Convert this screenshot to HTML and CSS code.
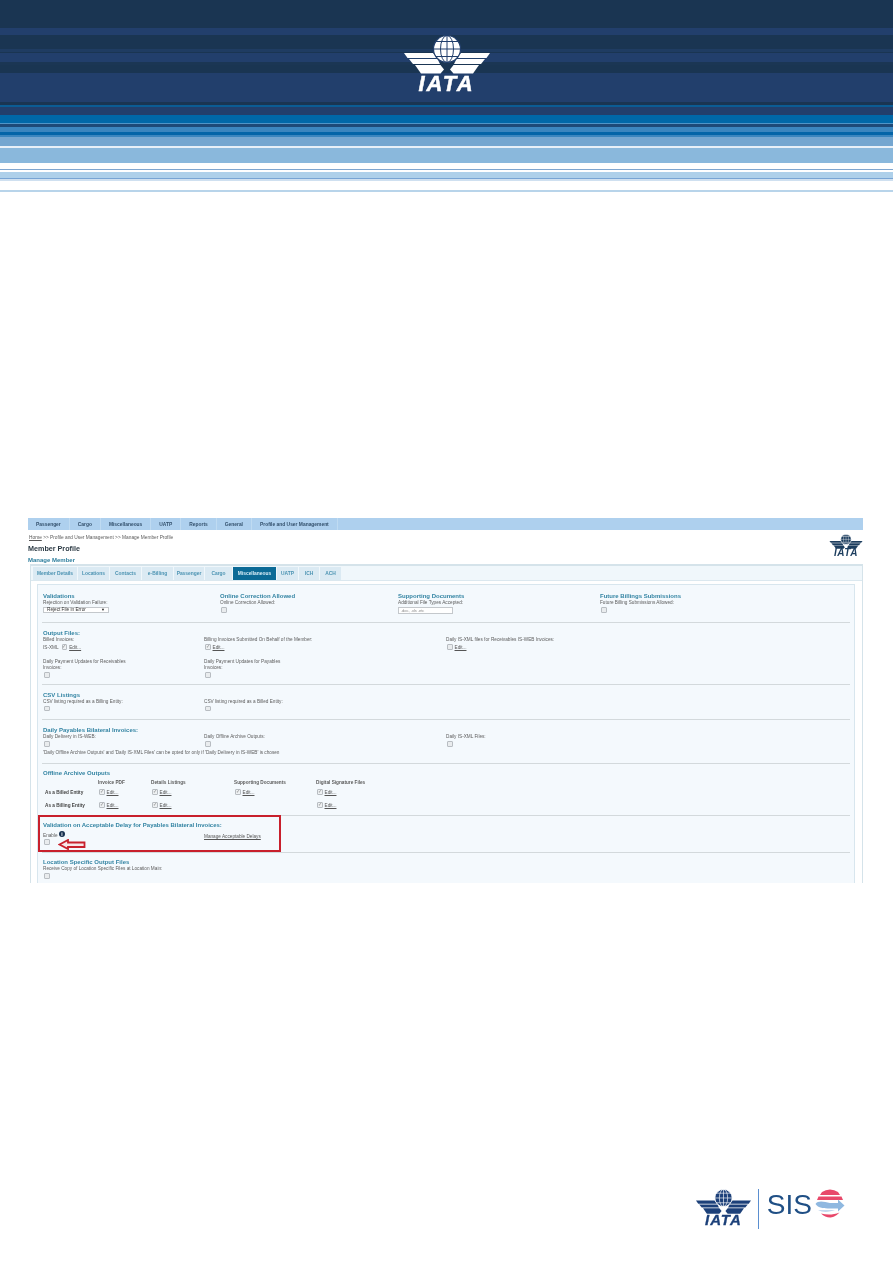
FILE: index.html
```html
<!DOCTYPE html>
<html lang="en">
<head>
    <meta charset="UTF-8">
    <meta name="viewport" content="width=device-width, initial-scale=1.0">
    <title>IATA SIS - Member Profile</title>
    <link rel="stylesheet" href="styles.css">
</head>
<body>
    <!-- Shared wings + globe mark -->
    <svg class="defs" aria-hidden="true">
        <symbol id="iata-mark" viewBox="0 0 86 39">
            <g id="iata-wing" class="mark-fill">
                <path d="M0 18H29L33 23H3.500Z"/>
                <path d="M5 24H33.500L36 29H9Z"/>
                <path d="M11 30H36.500L40 34.500L36.500 38.500H17Z"/>
            </g>
            <use href="#iata-wing" transform="matrix(-1 0 0 1 86 0)"/>
            <circle class="mark-fill mark-ring" cx="43" cy="14" r="13.500"/>
            <g class="mark-line">
                <ellipse cx="43" cy="14" rx="6.500" ry="13.500"/>
                <path d="M43 .5V27.500M29.500 14H56.500M32 6.500H54M32 21.500H54"/>
            </g>
        </symbol>
    </svg>

    <!-- Header Section -->
    <header class="banner">
        <div class="iata-logo logo-banner">
            <svg class="logo-mark"><use href="#iata-mark"/></svg>
            <span class="logo-text">IATA</span>
        </div>
    </header>

    <!-- Screenshot of the profile page -->
    <main class="shot">
        <nav class="menu">
            <a href="#">Passenger</a>
            <a href="#">Cargo</a>
            <a href="#">Miscellaneous</a>
            <a href="#">UATP</a>
            <a href="#">Reports</a>
            <a href="#">General</a>
            <a href="#">Profile and User Management</a>
        </nav>

        <div class="shot-head">
            <div>
                <p class="crumbs"><a href="#">Home</a> &gt;&gt; Profile and User Management &gt;&gt; Manage Member Profile</p>
                <h1>Member Profile</h1>
                <h2>Manage Member</h2>
            </div>
            <div class="iata-logo logo-small">
                <svg class="logo-mark"><use href="#iata-mark"/></svg>
                <span class="logo-text">IATA</span>
            </div>
        </div>

        <div class="panel">
            <ul class="tabs">
                <li>Member Details</li>
                <li>Locations</li>
                <li>Contacts</li>
                <li>e-Billing</li>
                <li>Passenger</li>
                <li>Cargo</li>
                <li class="active">Miscellaneous</li>
                <li>UATP</li>
                <li>ICH</li>
                <li>ACH</li>
            </ul>

            <div class="box">
                <section class="sec sec-validations">
                    <div class="cols cols-four">
                        <div>
                            <h3>Validations</h3>
                            <label>Rejection on Validation Failure:</label>
                            <div class="select"><span>Reject File in Error</span><span class="caret">▼</span></div>
                        </div>
                        <div>
                            <h3>Online Correction Allowed</h3>
                            <label>Online Correction Allowed:</label>
                            <input type="checkbox">
                        </div>
                        <div>
                            <h3>Supporting Documents</h3>
                            <label>Additional File Types Accepted:</label>
                            <div class="text-input">.doc, .xls .etc</div>
                        </div>
                        <div>
                            <h3>Future Billings Submissions</h3>
                            <label>Future Billing Submissions Allowed:</label>
                            <input type="checkbox">
                        </div>
                    </div>
                </section>

                <section class="sec sec-output">
                    <h3>Output Files:</h3>
                    <div class="cols cols-three">
                        <div>
                            <label>Billed Invoices:</label>
                            <div class="check-row">IS-XML <input type="checkbox" checked> <a href="#">Edit...</a></div>
                        </div>
                        <div>
                            <label>Billing Invoices Submitted On Behalf of the Member:</label>
                            <div class="check-row"><input type="checkbox" checked> <a href="#">Edit...</a></div>
                        </div>
                        <div>
                            <label>Daily IS-XML files for Receivables IS-WEB Invoices:</label>
                            <div class="check-row"><input type="checkbox"> <a href="#">Edit...</a></div>
                        </div>
                    </div>
                    <div class="cols cols-three row-gap">
                        <div>
                            <label>Daily Payment Updates for Receivables<br>Invoices:</label>
                            <input type="checkbox">
                        </div>
                        <div>
                            <label>Daily Payment Updates for Payables<br>Invoices:</label>
                            <input type="checkbox">
                        </div>
                    </div>
                </section>

                <section class="sec sec-csv">
                    <h3>CSV Listings</h3>
                    <div class="cols cols-three">
                        <div>
                            <label>CSV listing required as a Billing Entity:</label>
                            <input type="checkbox">
                        </div>
                        <div>
                            <label>CSV listing required as a Billed Entity:</label>
                            <input type="checkbox">
                        </div>
                    </div>
                </section>

                <section class="sec sec-daily">
                    <h3>Daily Payables Bilateral Invoices:</h3>
                    <div class="cols cols-three">
                        <div>
                            <label>Daily Delivery in IS-WEB:</label>
                            <input type="checkbox">
                        </div>
                        <div>
                            <label>Daily Offline Archive Outputs:</label>
                            <input type="checkbox">
                        </div>
                        <div>
                            <label>Daily IS-XML Files:</label>
                            <input type="checkbox">
                        </div>
                    </div>
                    <p class="note">'Daily Offline Archive Outputs' and 'Daily IS-XML Files' can be opted for only if 'Daily Delivery in IS-WEB' is chosen</p>
                </section>

                <section class="sec sec-offline">
                    <h3>Offline Archive Outputs</h3>
                    <div class="archive">
                        <span></span>
                        <b>Invoice PDF</b>
                        <b>Details Listings</b>
                        <b>Supporting Documents</b>
                        <b>Digital Signature Files</b>

                        <b class="entity">As a Billed Entity</b>
                        <div class="check-row"><input type="checkbox" checked> <a href="#">Edit...</a></div>
                        <div class="check-row"><input type="checkbox" checked> <a href="#">Edit...</a></div>
                        <div class="check-row"><input type="checkbox" checked> <a href="#">Edit...</a></div>
                        <div class="check-row"><input type="checkbox" checked> <a href="#">Edit...</a></div>

                        <b class="entity">As a Billing Entity</b>
                        <div class="check-row"><input type="checkbox" checked> <a href="#">Edit...</a></div>
                        <div class="check-row"><input type="checkbox" checked> <a href="#">Edit...</a></div>
                        <span></span>
                        <div class="check-row"><input type="checkbox" checked> <a href="#">Edit...</a></div>
                    </div>
                </section>

                <section class="sec sec-delay">
                    <h3>Validation on Acceptable Delay for Payables Bilateral Invoices:</h3>
                    <div class="cols cols-three">
                        <div>
                            <label>Enable <span class="info">i</span></label>
                            <input type="checkbox">
                        </div>
                        <div class="manage"><a href="#">Manage Acceptable Delays</a></div>
                    </div>
                    <!-- Annotation drawn over the screenshot -->
                    <div class="callout"></div>
                    <svg class="callout-arrow" viewBox="0 0 28 11">
                        <path d="M1.500 5.500L10 1V3.500H26.500V8H10V10Z"/>
                    </svg>
                </section>

                <section class="sec sec-location">
                    <h3>Location Specific Output Files</h3>
                    <label>Receive Copy of Location Specific Files at Location Main:</label>
                    <input type="checkbox">
                </section>
                <div class="cut-line"></div>
            </div>
        </div>
    </main>

    <!-- Footer Logos -->
    <footer class="footer">
        <div class="iata-logo logo-footer">
            <svg class="logo-mark"><use href="#iata-mark"/></svg>
            <span class="logo-text">IATA</span>
        </div>
        <span class="footer-rule"></span>
        <span class="sis">SIS</span>
        <svg class="sis-globe" viewBox="0 0 30 30">
            <path class="sis-red" d="M7 3A14 14 0 0 1 23 3L25 6H5Z"/>
            <path class="sis-red" d="M3.500 7.500H26.500L28 11H2Z"/>
            <path class="sis-blue" d="M.5 15C3 11 9 12.500 15 14H23V10.500L29.500 16.500L23 22.500V19.500H15C9 19.500 3 19 .5 15Z"/>
            <path class="sis-blue-pale" d="M3 21H20C15 23 8 24 3 21Z"/>
            <path class="sis-red" d="M6 24.500C12 26 18 26 24.500 23.500C21 27.500 17 28.500 15 28.500C12 28.500 8.500 27 6 24.500Z"/>
        </svg>
    </footer>
</body>
</html>
```

FILE: styles.css
```css
body {
    margin: 0;
    background-color: #fff;
    font-family: 'Liberation Sans', Arial, sans-serif;
}

.defs {
    display: none;
}

/* Striped page banner */
.banner {
    display: flex;
    justify-content: center;
    box-sizing: border-box;
    height: 192px;
    padding-top: 35px;
    background: linear-gradient(to bottom,
        #1a3552 0 28px, #223f6c 28px 35px, #1a3552 35px 49px, #1f3c62 49px 52px,
        #1a3552 52px 53px, #223f6c 53px 62px, #1b3654 62px 65px, #1a3552 65px 73px,
        #223f6c 73px 102px, #1a3552 102px 105px, #0b5c94 105px 107px, #223f6c 107px 115px,
        #0068a8 115px 123px, #4f95c8 123px 124px, #1d4a78 124px 127px, #3b86bf 127px 132px,
        #0465a8 132px 135px, #3b86bf 135px 137px, #74a6d0 137px 146px, #e8f0f8 146px 148px,
        #8ab8dc 148px 163px, #fff 163px 169px, #7fa6d0 169px 170px, #fff 170px 172px,
        #aed0ea 172px 178px, #78a4d4 178px 179px, #cfe0f0 179px 181px, #fff 181px 190px,
        #b8d4ea 190px 192px);
}

.iata-logo {
    display: flex;
    flex-direction: column;
    align-items: center;
    color: var(--logo-ink);
}

.logo-mark {
    display: block;
}

.mark-fill {
    fill: var(--logo-ink);
}

.mark-ring {
    stroke: var(--logo-line);
    stroke-width: 1.2;
}

.mark-line {
    fill: none;
    stroke: var(--logo-line);
    stroke-width: 1;
}

.logo-text {
    font-weight: bold;
    font-style: italic;
}

.logo-banner {
    --logo-ink: #fff;
    --logo-line: #223f6c;
    filter: blur(0.3px);
}

.logo-banner .logo-mark {
    width: 86px;
    height: 39px;
}

.logo-banner .logo-text {
    margin-top: 1px;
    font-size: 22px;
    line-height: 17px;
    letter-spacing: 2px;
    -webkit-text-stroke: 0.5px #fff;
}

.logo-small {
    --logo-ink: #1c3d5e;
    --logo-line: #fff;
    flex: none;
    margin-top: 4px;
}

.logo-small .logo-mark {
    width: 34px;
    height: 15px;
}

.logo-small .logo-text {
    font-size: 10px;
    line-height: 8px;
    letter-spacing: 0.5px;
}

.logo-footer {
    --logo-ink: #1c4079;
    --logo-line: #fff;
}

.logo-footer .logo-mark {
    width: 55px;
    height: 25px;
}

.logo-footer .logo-text {
    font-size: 15px;
    line-height: 11px;
    letter-spacing: 1px;
    -webkit-text-stroke: 0.3px #1c4079;
}

/* Screenshot area */
.shot {
    height: 365px;
    margin: 326px 30px 0 28px;
    overflow: hidden;
    font-size: 4.700px;
    color: #5c5c5c;
    filter: blur(0.4px);
}

.shot a {
    color: #555;
}

.menu {
    display: flex;
    height: 12px;
    background-color: #aed0ee;
}

.menu a {
    display: flex;
    align-items: center;
    padding: 0 8px;
    font-size: 4.900px;
    font-weight: bold;
    color: #33506c;
    text-decoration: none;
    border-right: 1px solid #bfdbf2;
}

.shot-head {
    display: flex;
    justify-content: space-between;
    height: 34px;
}

.crumbs {
    margin: 4.500px 0 0 1px;
    font-size: 4.800px;
    line-height: 6px;
}

h1 {
    margin: 3.500px 0 0;
    font-size: 7.200px;
    line-height: 10px;
    color: #2c3a44;
}

h2 {
    margin: 2px 0 0;
    font-size: 6px;
    line-height: 8px;
    color: #2f7f9e;
}

.panel {
    box-sizing: border-box;
    height: 319px;
    margin: 0 0 0 2px;
    border: 1px solid #d5e3ea;
    border-bottom: none;
    border-top-width: 2px;
    background-color: #fff;
}

.tabs {
    display: grid;
    grid-template-columns: 45px 32px 32px 32px 31px 28px 44px 22px 21px 22px;
    height: 13px;
    margin: 0;
    padding: 1px 0 0 2px;
    list-style: none;
    background-color: #f0f7fb;
    border-bottom: 1px solid #dbe8ef;
}

.tabs li {
    display: flex;
    align-items: center;
    justify-content: center;
    font-size: 4.900px;
    font-weight: bold;
    color: #4b93b2;
    background-color: #dbeaf3;
    border-right: 1px solid #f0f7fb;
}

.tabs .active {
    color: #d8edf7;
    background-color: #0b6a96;
}

.box {
    box-sizing: border-box;
    height: 306px;
    margin: 3px 7px 0 6px;
    padding: 0 4px;
    background-color: #f4f9fd;
    border: 1px solid #d8e6ee;
    border-bottom: none;
}

.sec {
    position: relative;
    box-sizing: border-box;
    padding: 6px 0 0 1px;
    border-bottom: 1px solid #d3d9dc;
}

.sec-validations { height: 38px; padding-top: 7px; }
.sec-output { height: 62px; }
.sec-csv { height: 35px; padding-top: 5.500px; }
.sec-daily { height: 44px; }
.sec-offline { height: 52px; padding-top: 5px; }
.sec-delay { height: 37px; padding-top: 5px; }
.sec-location { height: 30px; padding-top: 5px; border-bottom: none; }

.cut-line {
    width: 727px;
    border-bottom: 1px solid #d3d9dc;
}

h3 {
    margin: 0;
    font-size: 6px;
    line-height: 8px;
    color: #3384a3;
}

label {
    display: block;
    line-height: 6.500px;
}

input[type="checkbox"] {
    appearance: none;
    display: block;
    position: relative;
    box-sizing: border-box;
    width: 5.500px;
    height: 5.500px;
    margin: 0.5px 0 0 1px;
    background-color: #e9ecee;
    border: 1px solid #b8bdc2;
    border-radius: 1px;
}

input[type="checkbox"]:checked {
    background-color: #eef1f3;
}

input[type="checkbox"]:checked::after {
    content: "✓";
    position: absolute;
    top: -2px;
    left: -0.5px;
    font-size: 5px;
    line-height: 6px;
    color: #888;
}

.cols {
    display: grid;
}

.cols-four {
    grid-template-columns: 177px 178px 202px 1fr;
}

.cols-three {
    grid-template-columns: 161px 242px 1fr;
}

.row-gap {
    margin-top: 8px;
}

.select {
    display: flex;
    justify-content: space-between;
    align-items: center;
    box-sizing: border-box;
    width: 66px;
    height: 6.500px;
    padding: 0 3px;
    color: #333;
    background-color: #fff;
    border: 1px solid #c4c8cc;
}

.caret {
    font-size: 4px;
    color: #222;
}

.text-input {
    box-sizing: border-box;
    width: 55px;
    height: 7px;
    padding-left: 2px;
    font-size: 4px;
    line-height: 6px;
    color: #888;
    background-color: #fff;
    border: 1px solid #c4c8cc;
}

.check-row {
    display: flex;
    align-items: center;
    gap: 2px;
    height: 7px;
}

.check-row input[type="checkbox"] {
    margin-top: 0;
}

.note {
    margin: 3.500px 0 0;
    line-height: 6px;
}

.archive {
    display: grid;
    grid-template-columns: 55px 53px 83px 82px 1fr;
    grid-template-rows: 7px 13px 13px;
    align-items: center;
    margin-top: 1.500px;
}

.archive b {
    line-height: 7px;
}

.entity {
    padding-left: 2px;
    color: #444;
}

.sec-delay label {
    margin-top: 1.500px;
}

.sec-delay input[type="checkbox"] {
    margin-top: 0;
}

.info {
    display: inline-block;
    width: 6px;
    height: 6px;
    font-size: 5px;
    font-weight: bold;
    line-height: 6px;
    text-align: center;
    vertical-align: 1px;
    color: #fff;
    background-color: #16304f;
    border-radius: 50%;
}

.manage {
    padding-top: 5px;
    line-height: 6px;
}

.callout {
    position: absolute;
    top: -1px;
    left: -4px;
    box-sizing: border-box;
    width: 243px;
    height: 37px;
    border: 2px solid #c8202c;
}

.callout-arrow {
    position: absolute;
    top: 23px;
    left: 16px;
    width: 28px;
    height: 11px;
    fill: #f7e6e8;
    stroke: #c8202c;
    stroke-width: 1.800;
}

/* Footer logos */
.footer {
    display: flex;
    align-items: flex-start;
    margin-top: 306px;
    padding-right: 48px;
    justify-content: flex-end;
    filter: blur(0.25px);
}

.footer-rule {
    width: 1px;
    height: 40px;
    margin: 0 8px 0 7px;
    background-color: #5b8fd0;
}

.sis {
    margin-top: 2px;
    font-size: 28px;
    line-height: 28px;
    color: #1f4f85;
}

.sis-globe {
    width: 30px;
    height: 30px;
    margin-left: 3px;
}

.sis-red {
    fill: #e8486a;
}

.sis-blue {
    fill: #8fb8e0;
}

.sis-blue-pale {
    fill: #c4d9ef;
}
```
